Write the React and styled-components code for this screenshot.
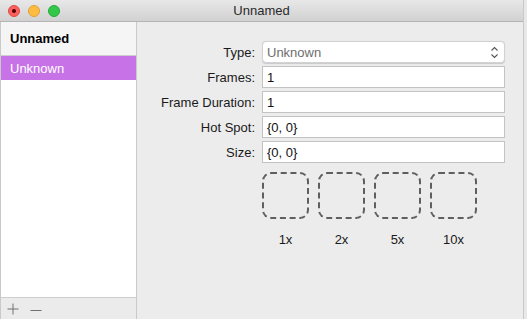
import React from 'react';
import styled, { createGlobalStyle } from 'styled-components';

const Global = createGlobalStyle`
  html, body { margin: 0; padding: 0; background: #e8e8e8; }
  body { font-family: "Liberation Sans", Arial, sans-serif; font-size: 13px; color: #1a1a1a; }
`;

const Window = styled.div`
  width: 524px;
  height: 319px;
  display: flex;
  flex-direction: column;
  background: #ececec;
  border-right: 1px solid #c8c8c8;
  box-sizing: border-box;
  overflow: hidden;
`;

const TitleBar = styled.div`
  height: 22px;
  flex: none;
  display: flex;
  align-items: center;
  position: relative;
  background: linear-gradient(#e9e8e9, #d2d1d2);
  border-bottom: 1px solid #b4b4b4;
  box-sizing: border-box;
`;

const Lights = styled.div`
  display: flex;
  gap: 8px;
  padding-left: 8px;
`;

const Light = styled.span`
  width: 12px;
  height: 12px;
  border-radius: 50%;
  box-sizing: border-box;
  background: ${p => p.color};
  border: 0.5px solid ${p => p.edge};
  display: flex;
  align-items: center;
  justify-content: center;
`;

const Dot = styled.span`
  width: 4px;
  height: 4px;
  border-radius: 50%;
  background: #4d0000;
`;

const Title = styled.div`
  position: absolute;
  left: 0;
  right: 0;
  text-align: center;
  font-size: 13px;
  color: #2a2a2a;
  pointer-events: none;
`;

const Body = styled.div`
  flex: 1;
  display: flex;
  min-height: 0;
`;

const Sidebar = styled.div`
  width: 137px;
  flex: none;
  display: flex;
  flex-direction: column;
  border-right: 1px solid #c9c9c9;
  border-left: 1px solid #c9c9c9;
  box-sizing: border-box;
`;

const List = styled.div`
  flex: 1;
  background: #fff;
  display: flex;
  flex-direction: column;
`;

const ListHeader = styled.div`
  height: 33px;
  background: #f5f5f5;
  border-bottom: 1px solid #cdcdcd;
  display: flex;
  align-items: center;
  padding-left: 9px;
  font-weight: bold;
  font-size: 13px;
  color: #000;
`;

const ListItem = styled.div`
  height: 24px;
  display: flex;
  align-items: center;
  padding-left: 9px;
  background: ${p => (p.selected ? '#c773e7' : 'transparent')};
  color: ${p => (p.selected ? '#fff' : '#000')};
`;

const BottomBar = styled.div`
  height: 22px;
  flex: none;
  border-top: 1px solid #cdcdcd;
  background: #ebebeb;
  display: flex;
  align-items: center;
  gap: 11px;
  padding-left: 6px;
  box-sizing: border-box;
`;

const Panel = styled.div`
  flex: 1;
  padding: 19px 18px 0 0;
  display: flex;
  flex-direction: column;
`;

const Form = styled.div`
  display: grid;
  grid-template-columns: 118px 1fr;
  column-gap: 7px;
  row-gap: 3px;
  align-items: center;
`;

const Label = styled.label`
  text-align: right;
  font-size: 13px;
  color: #1a1a1a;
`;

const Field = styled.div`
  height: 22px;
  box-sizing: border-box;
  background: #fff;
  border: 1px solid ${p => (p.popup ? '#d2d2d2' : '#c3c3c3')};
  border-radius: ${p => (p.popup ? '4px' : '0')};
  display: flex;
  align-items: center;
  justify-content: space-between;
  padding: 0 5px 0 4px;
  font-size: 13px;
  color: ${p => (p.popup ? '#6e6e6e' : '#111')};
  box-shadow: ${p => (p.popup ? '0 0.5px 1px rgba(0,0,0,0.15)' : 'none')};
`;

const Wells = styled.div`
  display: flex;
  gap: 9px;
  margin-top: 9px;
  margin-left: 125px;
`;

const WellCol = styled.div`
  display: flex;
  flex-direction: column;
  align-items: center;
  gap: 13px;
`;

const Well = styled.div`
  width: 47px;
  height: 47px;
  box-sizing: border-box;
  border: 2px dashed #5f5f5f;
  border-radius: 9px;
`;

const WellLabel = styled.span`
  font-size: 13px;
  color: #1a1a1a;
`;

const Chevrons = () => (
  <svg width="9" height="13" viewBox="0 0 9 13">
    <path d="M1.5 4.5 L4.5 1.5 L7.5 4.5 M1.5 8.5 L4.5 11.5 L7.5 8.5" fill="none" stroke="#555" strokeWidth="1.1" />
  </svg>
);

const PlusIcon = () => (
  <svg width="12" height="12" viewBox="0 0 12 12">
    <path d="M6 0.5 V11.5 M0.5 6 H11.5" stroke="#707070" strokeWidth="1" />
  </svg>
);

const MinusIcon = () => (
  <svg width="12" height="12" viewBox="0 0 12 12">
    <path d="M0.5 7.5 H11.5" stroke="#707070" strokeWidth="1" />
  </svg>
);

const rows = [
  ['Frames:', '1'],
  ['Frame Duration:', '1'],
  ['Hot Spot:', '{0, 0}'],
  ['Size:', '{0, 0}'],
];

const scales = ['1x', '2x', '5x', '10x'];

export default function App() {
  return (
    <>
      <Global />
      <Window>
        <TitleBar>
          <Lights>
            <Light color="#fc605c" edge="#de4a46"><Dot /></Light>
            <Light color="#fdbc40" edge="#dea236" />
            <Light color="#34c84a" edge="#27a93a" />
          </Lights>
          <Title>Unnamed</Title>
        </TitleBar>
        <Body>
          <Sidebar>
            <List>
              <ListHeader>Unnamed</ListHeader>
              <ListItem selected>Unknown</ListItem>
            </List>
            <BottomBar>
              <PlusIcon />
              <MinusIcon />
            </BottomBar>
          </Sidebar>
          <Panel>
            <Form>
              <Label>Type:</Label>
              <Field popup>
                <span>Unknown</span>
                <Chevrons />
              </Field>
              {rows.map(([label, value]) => (
                <React.Fragment key={label}>
                  <Label>{label}</Label>
                  <Field>{value}</Field>
                </React.Fragment>
              ))}
            </Form>
            <Wells>
              {scales.map(s => (
                <WellCol key={s}>
                  <Well />
                  <WellLabel>{s}</WellLabel>
                </WellCol>
              ))}
            </Wells>
          </Panel>
        </Body>
      </Window>
    </>
  );
}
